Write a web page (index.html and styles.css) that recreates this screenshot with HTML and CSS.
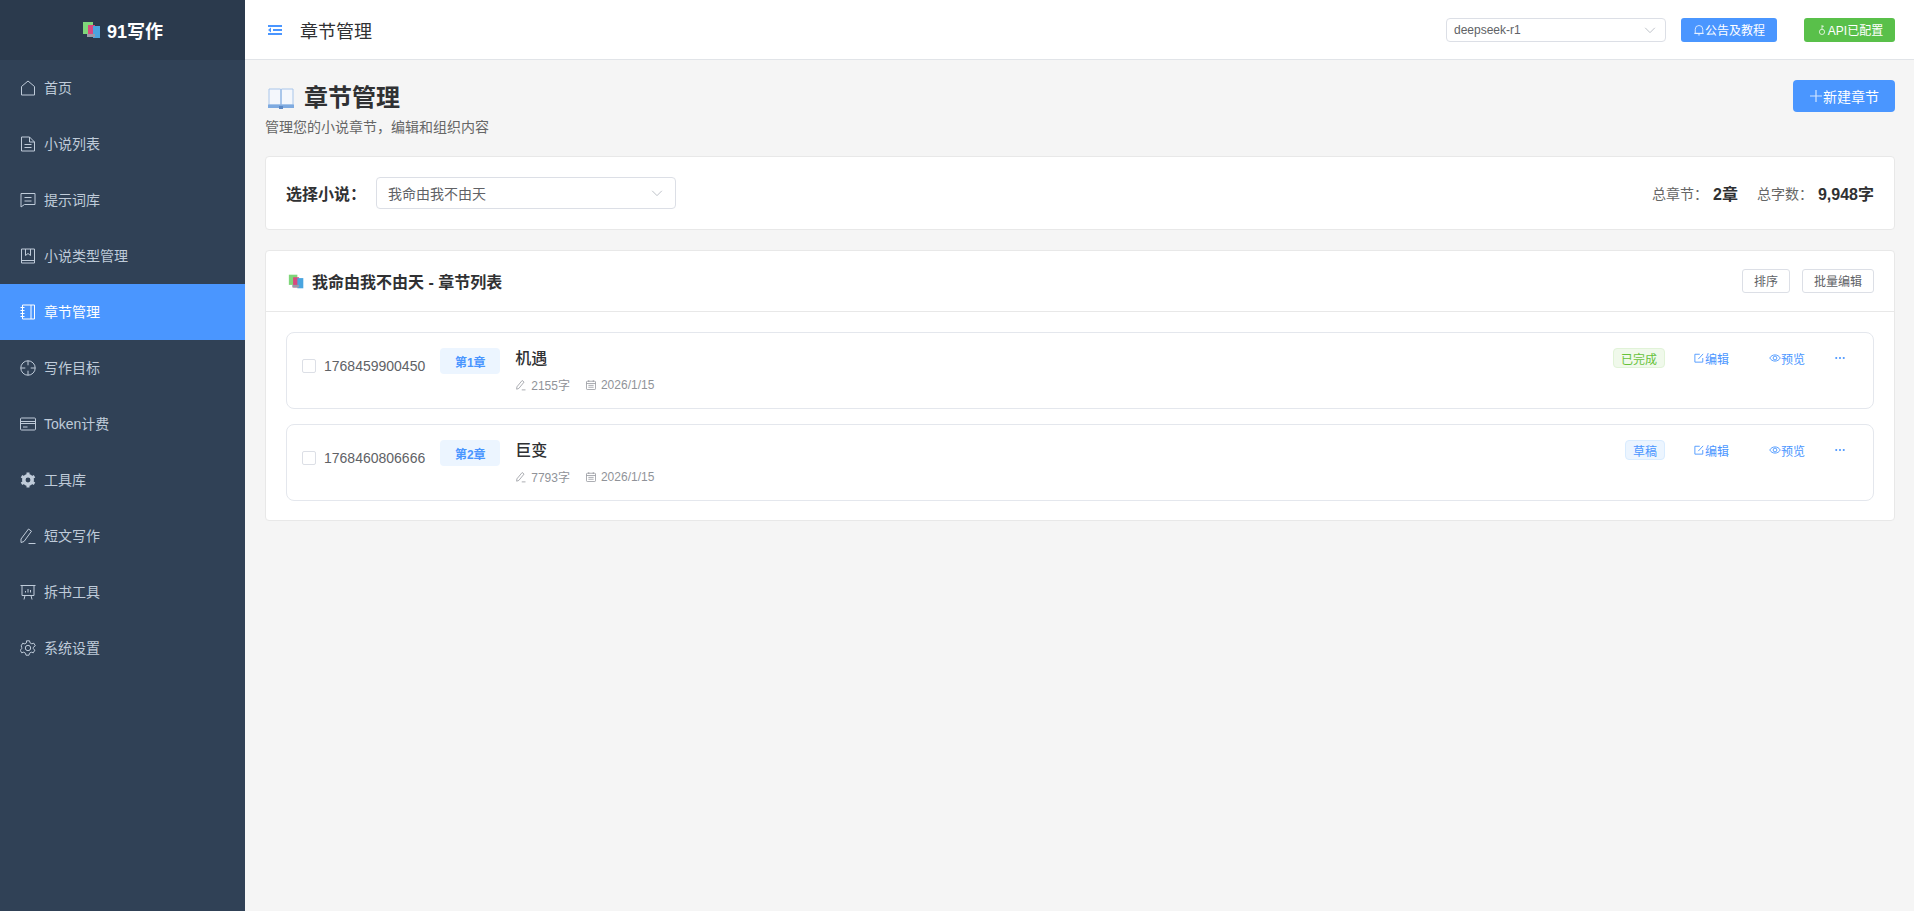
FILE: index.html
```html
<!DOCTYPE html>
<html lang="zh-CN">
<head>
    <meta charset="UTF-8">
    <title>91写作 - 章节管理</title>
    <link rel="stylesheet" href="styles.css">
</head>
<body>
<svg class="defs" width="0" height="0">
    <symbol id="books" viewBox="0 0 20 20">
        <rect x="1" y="2" width="10" height="12" fill="#7fd67a"/>
        <rect x="6" y="5" width="7" height="12" fill="#d9487f"/>
        <rect x="11" y="6" width="7" height="12" fill="#4aa5e0"/>
        <rect x="5" y="14" width="8" height="3" fill="#9a9aa8"/>
    </symbol>
    <symbol id="pen" viewBox="0 0 16 16">
        <path d="M2.5 10.5 9.5 2l2.6 2.1-7 8.5-2.9 1z M9 14.5h5" fill="none" stroke="currentColor" stroke-width="1"/>
    </symbol>
    <symbol id="calendar" viewBox="0 0 16 16">
        <rect x="2" y="3" width="12" height="11" rx="1" fill="none" stroke="currentColor"/>
        <path d="M2 6h12M4.5 8.500h7M4.5 11h7M5 1.5V4M11 1.5V4" fill="none" stroke="currentColor"/>
    </symbol>
    <symbol id="edit" viewBox="0 0 16 16">
        <path d="M13 8v5.5H2.5V3H9M7 9.500l6.500-7" fill="none" stroke="currentColor" stroke-width="1.2"/>
    </symbol>
    <symbol id="eye" viewBox="0 0 16 16">
        <path d="M1 8c3-5.500 11-5.500 14 0-3 5.500-11 5.500-14 0z" fill="none" stroke="currentColor" stroke-width="1.2"/>
        <circle cx="8" cy="8" r="2.5" fill="none" stroke="currentColor" stroke-width="1.2"/>
    </symbol>
    <symbol id="more" viewBox="0 0 16 16">
        <circle cx="3" cy="8" r="1.4" fill="currentColor"/>
        <circle cx="8" cy="8" r="1.4" fill="currentColor"/>
        <circle cx="13" cy="8" r="1.4" fill="currentColor"/>
    </symbol>
    <symbol id="chevron" viewBox="0 0 16 16">
        <path d="M2.5 5.500 8 11l5.500-5.500" fill="none" stroke="currentColor"/>
    </symbol>
</svg>

<div class="app">
    <aside class="sidebar">
        <div class="logo">
            <svg class="logo-icon"><use href="#books"/></svg>
            <span>91写作</span>
        </div>
        <nav class="menu">
            <a class="menu-item">
                <svg viewBox="0 0 16 16"><path d="M1.5 6.500 8 1l6.500 5.500V15h-13z"/></svg>
                <span>首页</span>
            </a>
            <a class="menu-item">
                <svg viewBox="0 0 16 16"><path d="M1.5 1h8l5 5v9h-13zM9.500 1v5h5M4.500 8.500h7M4.500 11.500h7"/></svg>
                <span>小说列表</span>
            </a>
            <a class="menu-item">
                <svg viewBox="0 0 16 16"><path d="M1 1.500h14v11H4.500L1 15zM4.500 5.500h7M4.500 9h7"/></svg>
                <span>提示词库</span>
            </a>
            <a class="menu-item">
                <svg viewBox="0 0 16 16"><path d="M1.500 1h13v14h-13zM1.500 12.500h13M5.500 1v6.500l2.500-2 2.500 2V1"/></svg>
                <span>小说类型管理</span>
            </a>
            <a class="menu-item active">
                <svg viewBox="0 0 16 16"><path d="M2.500 1h12v14h-12zM11 1v14M.5 3.500h4M.5 6.500h4M.5 9.500h4M.5 12.500h4"/></svg>
                <span>章节管理</span>
            </a>
            <a class="menu-item">
                <svg viewBox="0 0 16 16"><circle cx="8" cy="8" r="7.2"/><path d="M8 .8v4.500M8 10.700v4.500M.8 8h4.500M10.700 8h4.500"/></svg>
                <span>写作目标</span>
            </a>
            <a class="menu-item">
                <svg viewBox="0 0 16 16"><rect x=".5" y="2" width="15" height="12" rx="1"/><path d="M.5 5.500h15M.5 7.500h15M3 11h4.500"/></svg>
                <span>Token计费</span>
            </a>
            <a class="menu-item">
                <svg viewBox="0 0 16 16"><circle class="gear" cx="8" cy="8" r="4.2"/><path class="gear-teeth" d="M8 .5v3M8 12.500v3M1.500 4.200l2.600 1.500M11.900 10.300l2.600 1.500M1.500 11.800l2.600-1.500M11.900 5.700l2.600-1.500"/></svg>
                <span>工具库</span>
            </a>
            <a class="menu-item">
                <svg viewBox="0 0 16 16"><path d="M1 11 8.500 1l3 2.200L4 13.500l-3 1zM8.500 15.500H15.500"/></svg>
                <span>短文写作</span>
            </a>
            <a class="menu-item">
                <svg viewBox="0 0 16 16"><path d="M.5 1.500h15M2 1.500v10h12v-10M5 11.500l-1 4M11 11.500l1 4M5.500 8.500V7M8 8.500V5M10.500 8.500V6"/></svg>
                <span>拆书工具</span>
            </a>
            <a class="menu-item">
                <svg viewBox="0 0 16 16"><path d="M6.500 .8h3l.5 2 1.800 1 2-.6 1.500 2.600L13.300 7.300v1.400l1.500 1.500-1.500 2.600-2-.6-1.800 1-.5 2h-3l-.5-2-1.800-1-2 .6-1.500-2.600 1.500-1.500V7.300L1.200 5.800l1.500-2.600 2 .6 1.800-1z"/><circle cx="8" cy="8" r="2.7"/></svg>
                <span>系统设置</span>
            </a>
        </nav>
    </aside>

    <div class="main">
        <header class="topbar">
            <svg class="toggle" viewBox="0 0 14 12"><path d="M0 1h14v2H0zM5 5h9v2H5zM0 9h14v2H0zM0 6l3-2.500v5z"/></svg>
            <span class="topbar-title">章节管理</span>
            <div class="topbar-right">
                <div class="select select-model">
                    <span>deepseek-r1</span>
                    <svg class="chevron"><use href="#chevron"/></svg>
                </div>
                <button class="btn btn-notice">
                    <svg viewBox="0 0 16 16"><path d="M3 12.500V7a5 5 0 0 1 10 0v5.500zM1.500 12.500h13M6.500 14.500h3"/></svg>公告及教程
                </button>
                <button class="btn btn-api">
                    <svg viewBox="0 0 16 16"><circle cx="8" cy="10.500" r="3.5"/><path d="M8 7V1.500M8 3h2.500"/></svg>API已配置
                </button>
            </div>
        </header>

        <main class="content">
            <div class="page-head">
                <div class="page-intro">
                    <h1 class="page-title">
                        <svg class="book-icon" viewBox="0 0 26 22">
                            <path d="M1 2h11.500v16H1z" fill="#f4f7fc" stroke="#a9c6ea"/>
                            <path d="M13.500 2H25v16H13.500z" fill="#f4f7fc" stroke="#a9c6ea"/>
                            <path d="M0 17.500h26V21H0z" fill="#7eaae0"/>
                            <path d="M11 19h4v3h-4z" fill="#5c88c4"/>
                        </svg>
                        章节管理
                    </h1>
                    <p class="page-desc">管理您的小说章节，编辑和组织内容</p>
                </div>
                <button class="btn-new">
                    <svg viewBox="0 0 14 14"><path d="M7 1v12M1 7h12"/></svg>新建章节
                </button>
            </div>

            <section class="card filter-card">
                <label class="filter-label">选择小说：</label>
                <div class="select select-novel">
                    <span>我命由我不由天</span>
                    <svg class="chevron"><use href="#chevron"/></svg>
                </div>
                <div class="stats">
                    <span class="stat-label">总章节：</span><b class="stat-value">2章</b>
                    <span class="stat-label stat-gap">总字数：</span><b class="stat-value">9,948字</b>
                </div>
            </section>

            <section class="card list-card">
                <div class="list-head">
                    <h2 class="list-title">
                        <svg class="list-icon"><use href="#books"/></svg>
                        我命由我不由天 - 章节列表
                    </h2>
                    <div class="list-actions">
                        <button class="btn-plain">排序</button>
                        <button class="btn-plain">批量编辑</button>
                    </div>
                </div>
                <div class="list-body">
                    <div class="chapter">
                        <span class="checkbox"></span>
                        <span class="chapter-id">1768459900450</span>
                        <span class="chapter-no">第1章</span>
                        <div class="chapter-info">
                            <div class="chapter-name">机遇</div>
                            <div class="chapter-meta">
                                <span><svg><use href="#pen"/></svg>2155字</span>
                                <span><svg><use href="#calendar"/></svg>2026/1/15</span>
                            </div>
                        </div>
                        <div class="chapter-ops">
                            <span class="status status-done">已完成</span>
                            <a class="op op-edit"><svg><use href="#edit"/></svg>编辑</a>
                            <a class="op op-view"><svg><use href="#eye"/></svg>预览</a>
                            <a class="op op-more"><svg><use href="#more"/></svg></a>
                        </div>
                    </div>
                    <div class="chapter">
                        <span class="checkbox"></span>
                        <span class="chapter-id">1768460806666</span>
                        <span class="chapter-no">第2章</span>
                        <div class="chapter-info">
                            <div class="chapter-name">巨变</div>
                            <div class="chapter-meta">
                                <span><svg><use href="#pen"/></svg>7793字</span>
                                <span><svg><use href="#calendar"/></svg>2026/1/15</span>
                            </div>
                        </div>
                        <div class="chapter-ops">
                            <span class="status status-draft">草稿</span>
                            <a class="op op-edit"><svg><use href="#edit"/></svg>编辑</a>
                            <a class="op op-view"><svg><use href="#eye"/></svg>预览</a>
                            <a class="op op-more"><svg><use href="#more"/></svg></a>
                        </div>
                    </div>
                </div>
            </section>
        </main>
    </div>
</div>
</body>
</html>
```

FILE: styles.css
```css
* {
    box-sizing: border-box;
}
body {
    margin: 0;
    font-family: "Liberation Sans", "Noto Sans CJK SC", sans-serif;
    font-size: 14px;
    color: #303133;
    background: #f5f5f5;
}
button {
    font-family: inherit;
    cursor: pointer;
}
.defs {
    position: absolute;
}
.app {
    display: flex;
    height: 100vh;
    overflow: hidden;
}

/* sidebar */
.sidebar {
    width: 245px;
    flex-shrink: 0;
    background: #304156;
}
.logo {
    height: 60px;
    display: flex;
    align-items: center;
    justify-content: center;
    gap: 5px;
    background: #2b3a4d;
    color: #fff;
    font-size: 18px;
    font-weight: bold;
}
.logo-icon {
    width: 20px;
    height: 20px;
}
.menu-item {
    height: 56px;
    display: flex;
    align-items: center;
    gap: 8px;
    padding-left: 20px;
    color: #bfcbd9;
    font-size: 14px;
}
.menu-item span {
    margin-top: -2px;
}
.menu-item svg {
    width: 16px;
    height: 16px;
    fill: none;
    stroke: currentColor;
    stroke-width: 1;
}
.menu-item .gear {
    stroke-width: 3.5;
}
.menu-item .gear-teeth {
    stroke-width: 3;
}
.menu-item.active {
    background: #4a96ff;
    color: #fff;
}

/* top bar */
.main {
    flex: 1;
    min-width: 0;
}
.topbar {
    height: 60px;
    display: flex;
    align-items: center;
    padding: 0 19px 0 23px;
    background: #fff;
    border-bottom: 1px solid #e1e4e8;
}
.toggle {
    width: 14px;
    height: 12px;
    fill: #4a96ff;
}
.topbar-title {
    margin-left: 18px;
    font-size: 18px;
}
.topbar-right {
    margin-left: auto;
    display: flex;
    align-items: center;
}
.select {
    display: flex;
    align-items: center;
    justify-content: space-between;
    background: #fff;
    border: 1px solid #dcdfe6;
    border-radius: 4px;
    color: #606266;
}
.select-model {
    width: 220px;
    height: 24px;
    padding: 0 8px 0 7px;
    font-size: 12px;
}
.chevron {
    width: 14px;
    height: 14px;
    color: #b4b8c0;
}
.btn {
    height: 24px;
    display: flex;
    align-items: center;
    justify-content: center;
    padding: 0;
    border: none;
    border-radius: 3px;
    color: #fff;
    font-size: 12px;
}
.btn svg {
    width: 12px;
    height: 12px;
    fill: none;
    stroke: currentColor;
}
.btn-notice {
    width: 96px;
    margin-left: 15px;
    background: #4a96ff;
}
.btn-api {
    width: 91px;
    margin-left: 27px;
    background: #59c04a;
}

/* page content */
.content {
    padding: 20px 19px 20px 20px;
}
.page-head {
    display: flex;
    justify-content: space-between;
    align-items: flex-start;
    height: 76px;
}
.page-intro {
    padding-top: 2px;
}
.page-title {
    display: flex;
    align-items: center;
    gap: 10px;
    margin: 0;
    padding-left: 3px;
    font-size: 24px;
    line-height: 32px;
}
.book-icon {
    width: 26px;
    height: 22px;
}
.page-desc {
    margin: 3px 0 0;
    color: #666;
    font-size: 14px;
    line-height: 20px;
}
.btn-new {
    width: 102px;
    height: 32px;
    display: flex;
    align-items: center;
    justify-content: center;
    padding: 0;
    border: none;
    border-radius: 4px;
    background: #4a96ff;
    color: #fff;
    font-size: 14px;
}
.btn-new svg {
    width: 14px;
    height: 14px;
    fill: none;
    stroke: rgba(255, 255, 255, 0.75);
    stroke-width: 1.2;
}
.card {
    background: #fff;
    border: 1px solid #e8e8e8;
    border-radius: 4px;
    margin-bottom: 20px;
}
.filter-card {
    height: 74px;
    display: flex;
    align-items: center;
    padding: 0 20px;
}
.filter-label {
    width: 90px;
    font-size: 16px;
    font-weight: bold;
}
.select-novel {
    width: 300px;
    height: 32px;
    padding: 0 11px;
    font-size: 14px;
}
.stats {
    margin-left: auto;
    display: flex;
    align-items: center;
}
.stat-label {
    color: #666;
    font-size: 14px;
}
.stat-gap {
    margin-left: 19px;
}
.stat-value {
    margin-left: 5px;
    font-size: 16px;
}

/* chapter list */
.list-head {
    height: 61px;
    display: flex;
    align-items: center;
    justify-content: space-between;
    padding: 0 20px;
    border-bottom: 1px solid #e8e8e8;
}
.list-title {
    display: flex;
    align-items: center;
    gap: 7px;
    margin: 0;
    padding-left: 2px;
    font-size: 16px;
}
.list-icon {
    width: 17px;
    height: 17px;
}
.list-actions {
    display: flex;
    gap: 12px;
    margin-top: -1px;
}
.btn-plain {
    height: 24px;
    padding: 0 11px;
    background: #fff;
    border: 1px solid #dcdfe6;
    border-radius: 3px;
    color: #606266;
    font-size: 12px;
}
.list-body {
    padding: 20px 20px 19px;
}
.chapter {
    height: 77px;
    display: flex;
    align-items: flex-start;
    padding: 0 15px;
    background: #fff;
    border: 1px solid #e4e7ed;
    border-radius: 8px;
}
.chapter + .chapter {
    margin-top: 15px;
}
.checkbox {
    width: 14px;
    height: 14px;
    margin-top: 26px;
    border: 1px solid #dcdfe6;
    border-radius: 2px;
}
.chapter-id {
    margin: 23px 0 0 8px;
    color: #606266;
    font-size: 14px;
    line-height: 20px;
}
.chapter-no {
    width: 60px;
    height: 26px;
    margin: 15px 0 0 15px;
    display: flex;
    align-items: center;
    justify-content: center;
    background: #ecf5ff;
    border-radius: 4px;
    color: #4a96ff;
    font-size: 12px;
    font-weight: bold;
}
.chapter-info {
    margin: 15px 0 0 15px;
}
.chapter-name {
    font-size: 16px;
    font-weight: 500;
    line-height: 22px;
}
.chapter-meta {
    display: flex;
    gap: 15px;
    margin-top: 6px;
    color: #909399;
    font-size: 12px;
}
.chapter-meta span {
    display: flex;
    align-items: center;
    gap: 4px;
}
.chapter-meta svg {
    width: 12px;
    height: 12px;
}
.chapter-ops {
    margin: 15px 12px 0 auto;
    display: flex;
    align-items: center;
    height: 20px;
}
.status {
    height: 20px;
    padding: 0 7px;
    display: flex;
    align-items: center;
    border-radius: 4px;
    font-size: 12px;
}
.status-done {
    background: #f0f9eb;
    border: 1px solid #e1f3d8;
    color: #67c23a;
}
.status-draft {
    background: #ecf5ff;
    border: 1px solid #d9ecff;
    color: #4a96ff;
}
.op {
    display: flex;
    align-items: center;
    color: #4a96ff;
    font-size: 12px;
}
.op svg {
    width: 12px;
    height: 12px;
}
.op-edit {
    margin-left: 28px;
}
.op-view {
    margin-left: 40px;
}
.op-more {
    margin-left: 29px;
}
```
